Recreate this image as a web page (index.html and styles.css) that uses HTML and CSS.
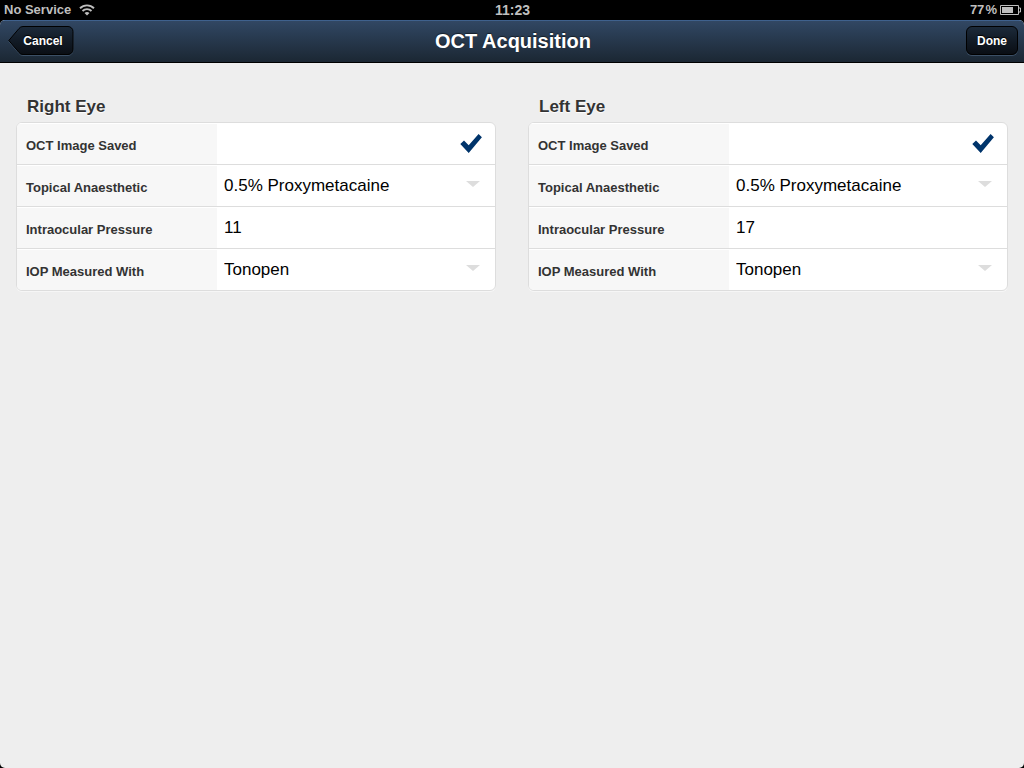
FILE: index.html
```html
<!DOCTYPE html>
<html lang="en">
<head>
<meta charset="utf-8">
<meta name="viewport" content="width=device-width, initial-scale=1">
<title>OCT Acquisition</title>
<link rel="stylesheet" href="styles.css">
</head>
<body>
<div class="status">
  <div class="status-left">
    <span>No Service</span>
    <svg class="wifi" viewBox="0 0 16 12" aria-hidden="true">
      <path d="M1 4.2a10 10 0 0 1 14 0M3.5 7a6.4 6.4 0 0 1 9 0" fill="none" stroke="currentColor" stroke-width="1.9"/>
      <path d="M5.5 9.1a3.6 3.6 0 0 1 5 0L8 11.6z" fill="currentColor"/>
    </svg>
  </div>
  <span class="clock">11:23</span>
  <div class="status-right">
    <span>77&#8202;%</span>
    <svg class="battery" viewBox="0 0 21 10" aria-hidden="true">
      <path d="M.5.5h18v9H.5zM18.500 3h2v4h-2" fill="none" stroke="currentColor"/>
      <path d="M2 2h11v6H2z" fill="currentColor"/>
    </svg>
  </div>
</div>
<div class="screen">
  <header class="toolbar">
    <button class="back" type="button">
      <svg class="back-shape" viewBox="0 0 66 30" aria-hidden="true">
        <defs>
          <linearGradient id="dark" x1="0" y1="0" x2="0" y2="1">
            <stop offset="0" stop-color="#1c2a3a"/><stop offset=".5" stop-color="#121b26"/><stop offset="1" stop-color="#0a0e14"/>
          </linearGradient>
        </defs>
        <path d="M15 1.500H60a5 5 0 0 1 5 5V24.500a5 5 0 0 1-5 5H15Q12.500 29.500 11 27.500L.8 15.500 11 3.500Q12.500 1.500 15 1.500Z" fill="none" stroke="#3b4f65"/>
        <path d="M15 .5H60a5 5 0 0 1 5 5V23.500a5 5 0 0 1-5 5H15Q12.500 28.500 11 26.500L.8 14.500 11 2.500Q12.500 .5 15 .5Z" fill="url(#dark)" stroke="#000"/>
      </svg>
      <span class="back-text">Cancel</span>
    </button>
    <h1 class="title">OCT Acquisition</h1>
    <button class="done" type="button">Done</button>
  </header>
  <main class="eyes">
    <section class="eye">
      <h2 class="eye-title">Right Eye</h2>
      <form class="fields">
        <div class="field">
          <label class="name" for="r-saved">OCT Image Saved</label>
          <div class="value tick">
            <input class="box" id="r-saved" type="checkbox" checked>
            <svg class="mark" viewBox="0 0 22 19" aria-hidden="true"><path d="M.3 10 4 6.500 8.700 11.200 18.600.1 21.900 3.300 8.700 19Z"/></svg>
          </div>
        </div>
        <div class="field">
          <label class="name" for="r-drug">Topical Anaesthetic</label>
          <div class="value drop">
            <select class="input" id="r-drug"><option>0.5% Proxymetacaine</option></select>
          </div>
        </div>
        <div class="field">
          <label class="name" for="r-iop">Intraocular Pressure</label>
          <div class="value"><input class="input" id="r-iop" type="text" inputmode="numeric" value="11"></div>
        </div>
        <div class="field">
          <label class="name" for="r-with">IOP Measured With</label>
          <div class="value drop">
            <select class="input" id="r-with"><option>Tonopen</option></select>
          </div>
        </div>
      </form>
    </section>
    <section class="eye">
      <h2 class="eye-title">Left Eye</h2>
      <form class="fields">
        <div class="field">
          <label class="name" for="l-saved">OCT Image Saved</label>
          <div class="value tick">
            <input class="box" id="l-saved" type="checkbox" checked>
            <svg class="mark" viewBox="0 0 22 19" aria-hidden="true"><path d="M.3 10 4 6.500 8.700 11.200 18.600.1 21.900 3.300 8.700 19Z"/></svg>
          </div>
        </div>
        <div class="field">
          <label class="name" for="l-drug">Topical Anaesthetic</label>
          <div class="value drop">
            <select class="input" id="l-drug"><option>0.5% Proxymetacaine</option></select>
          </div>
        </div>
        <div class="field">
          <label class="name" for="l-iop">Intraocular Pressure</label>
          <div class="value"><input class="input" id="l-iop" type="text" inputmode="numeric" value="17"></div>
        </div>
        <div class="field">
          <label class="name" for="l-with">IOP Measured With</label>
          <div class="value drop">
            <select class="input" id="l-with"><option>Tonopen</option></select>
          </div>
        </div>
      </form>
    </section>
  </main>
</div>
</body>
</html>
```
FILE: styles.css
```css
* { box-sizing: border-box; }

body {
  margin: 0;
  min-height: 100vh;
  display: flex;
  flex-direction: column;
  background: #000;
  font-family: "Liberation Sans", Arial, sans-serif;
  color: #333;
}

.status {
  display: grid;
  grid-template-columns: 1fr auto 1fr;
  height: 20px;
  padding: 0 3px 0 4px;
  color: #bfbfbf;
  font-size: 13px;
  font-weight: bold;
  line-height: 20px;
}
.status-left,
.status-right { display: flex; align-items: center; gap: 8px; }
.status-right { justify-content: flex-end; gap: 3px; }
.clock { font-size: 14px; }
.wifi { width: 16px; height: 12px; }
.battery { width: 21px; height: 10px; }

.screen {
  flex: 1;
  overflow: hidden;
  border-radius: 5px;
  background: #eee;
}

.toolbar {
  display: grid;
  grid-template-columns: 1fr auto 1fr;
  align-items: center;
  height: 43px;
  padding: 0 6px 2px 8px;
  background: linear-gradient(#314763, #1b2733);
  border-top: 1px solid #3f618d;
  border-bottom: 1px solid #000;
}
.title {
  margin: 0;
  color: #fff;
  font-size: 20px;
  line-height: 24px;
  text-shadow: 0 -1px 1px rgba(0, 0, 0, .5);
}
.back,
.done {
  height: 30px;
  border: 0;
  color: #fff;
  font: bold 12px/28px "Liberation Sans", Arial, sans-serif;
  text-shadow: 0 -1px 1px #000;
}
.back {
  display: grid;
  justify-self: start;
  width: 66px;
  padding: 0;
  background: none;
}
.back-shape,
.back-text { grid-area: 1 / 1; }
.back-shape { width: 66px; height: 30px; }
.back-text { padding-left: 4px; line-height: 30px; }
.done {
  justify-self: end;
  height: 29px;
  padding: 0 10px;
  border: 1px solid #000;
  border-radius: 6px;
  background: linear-gradient(#1c2a3a, #121b26 50%, #0a0e14);
  box-shadow: 0 1px 0 #3b4f65;
}

.eyes {
  display: grid;
  grid-template-columns: 1fr 1fr;
  gap: 32px;
  padding: 33px 16px;
}
.eye-title {
  margin: 0 0 4px 11px;
  font-size: 17px;
  line-height: 22px;
  text-shadow: 0 1px 1px #fff;
}
.fields {
  overflow: hidden;
  border: 1px solid #ddd;
  border-radius: 6px;
  background: #fff;
  box-shadow: 0 1px 0 #f6f6f6;
}
.field {
  display: grid;
  grid-template-columns: 200px 1fr;
  min-height: 42px;
  border-bottom: 1px solid #ddd;
}
.field:last-child { min-height: 41px; border-bottom: 0; }
.name {
  padding: 14px 9px 9px;
  border-top: 1px solid #fff;
  background: #f7f7f7;
  font-size: 13px;
  font-weight: bold;
  line-height: 16px;
}
.value { display: grid; align-items: center; }
.input {
  grid-area: 1 / 1;
  width: 100%;
  height: 41px;
  padding: 0 36px 0 7px;
  border: 0;
  background: none;
  color: #000;
  font: 17px/20px "Liberation Sans", Arial, sans-serif;
  appearance: none;
}
.drop::after {
  content: "";
  grid-area: 1 / 1;
  justify-self: end;
  margin: 0 15px 3px 0;
  border: 7px solid transparent;
  border-top: 6px solid #ddd;
  border-bottom: 0;
  pointer-events: none;
}
.box {
  grid-area: 1 / 1;
  width: 100%;
  height: 100%;
  margin: 0;
  appearance: none;
}
.mark {
  grid-area: 1 / 1;
  justify-self: end;
  width: 22px;
  height: 19px;
  margin-right: 13px;
  fill: #00346b;
  visibility: hidden;
  pointer-events: none;
}
.box:checked + .mark { visibility: visible; }
```
